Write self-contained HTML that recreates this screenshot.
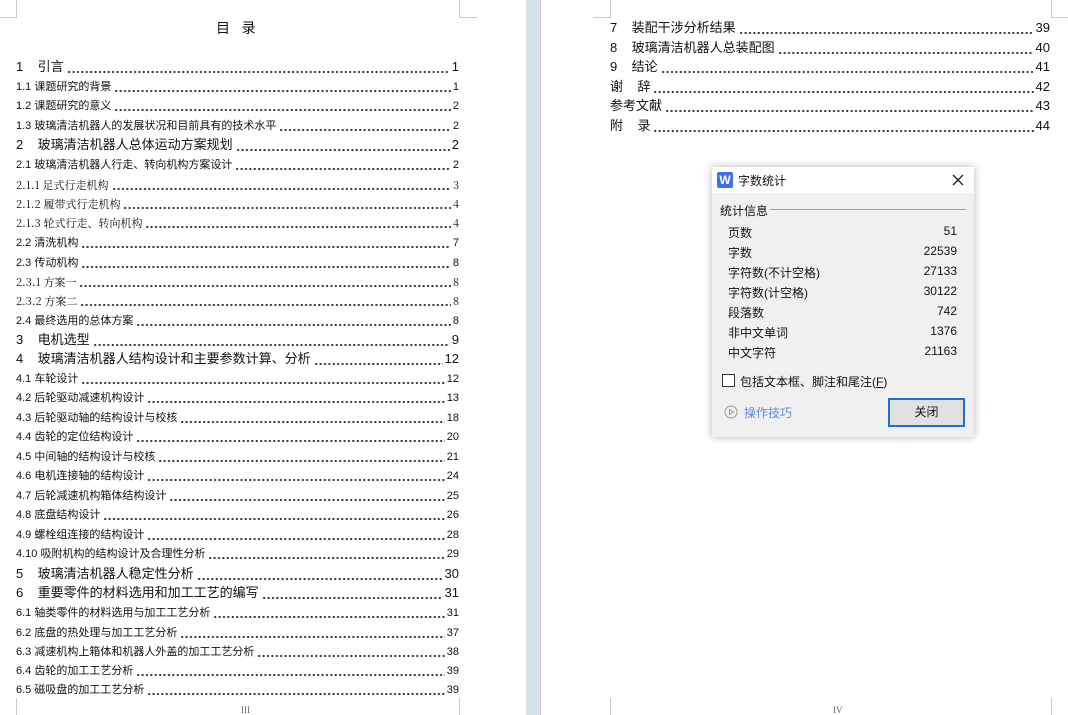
<!DOCTYPE html>
<html><head><meta charset="utf-8"><style>
*{margin:0;padding:0;box-sizing:border-box}
body{width:1068px;height:715px;overflow:hidden;background:#fff;position:relative;font-family:"Liberation Sans","Noto Sans CJK SC",sans-serif;color:#111}
.gap{position:absolute;left:526px;top:0;width:15px;height:715px;background:#d5e2e7;border-right:1px solid #c4ced3}
.m{position:absolute;border-color:#c8c8c8;border-style:solid;border-width:0}
.r{position:absolute;display:flex;align-items:flex-end;height:16px;font-size:11px;line-height:14px;white-space:nowrap}
.r .d{flex:1;height:10px;margin:0 2px 1px 3px;background-image:radial-gradient(circle,#333 0.9px,transparent 1.3px);background-size:4.4px 4px;background-repeat:repeat-x;background-position:0 6px}
.r.b{font-size:13px;line-height:16px;height:18px}
.r.s{font-family:"Noto Serif CJK SC","Liberation Serif",serif;font-size:11px;color:#111}
.L{left:16px;width:443px}
.R{left:610px;width:440px}
.dlg{position:absolute;left:712px;top:167px;width:262px;height:270px;background:#f0f0f0;box-shadow:0 0 8px rgba(0,0,0,.3);font-size:12px;color:#111}
.tb{height:26px;background:#fff;position:relative}
.row{position:absolute;left:16px;width:229px;display:flex;justify-content:space-between;font-size:12px}
</style></head><body>
<div class="gap"></div>
<div class="m" style="left:0;top:0;width:17px;height:18px;border-right-width:1px;border-bottom-width:1px"></div>
<div class="m" style="left:459px;top:0;width:18px;height:18px;border-left-width:1px;border-bottom-width:1px"></div>
<div class="m" style="left:0;top:698px;width:17px;height:17px;border-right-width:1px"></div>
<div class="m" style="left:459px;top:698px;width:18px;height:17px;border-left-width:1px"></div>
<div class="m" style="left:593px;top:0;width:18px;height:18px;border-right-width:1px;border-bottom-width:1px"></div>
<div class="m" style="left:1051px;top:0;width:17px;height:18px;border-left-width:1px;border-bottom-width:1px"></div>
<div class="m" style="left:593px;top:698px;width:18px;height:17px;border-right-width:1px"></div>
<div class="m" style="left:1051px;top:698px;width:17px;height:17px;border-left-width:1px"></div>
<div style="position:absolute;left:216px;top:18px;font-size:14px">目&nbsp;&nbsp;&nbsp;录</div>
<div style="position:absolute;left:241px;top:705px;font-size:9px;color:#666;font-family:'Liberation Serif',serif">III</div>
<div style="position:absolute;left:833px;top:705px;font-size:9px;color:#666;font-family:'Liberation Serif',serif">IV</div>

<div class="r b L" style="top:57px"><span>1&nbsp;&nbsp;&nbsp;&nbsp;引言</span><span class="d"></span><span>1</span></div>
<div class="r L" style="top:78px"><span>1.1 课题研究的背景</span><span class="d"></span><span>1</span></div>
<div class="r L" style="top:97px"><span>1.2 课题研究的意义</span><span class="d"></span><span>2</span></div>
<div class="r L" style="top:117px"><span>1.3 玻璃清洁机器人的发展状况和目前具有的技术水平</span><span class="d"></span><span>2</span></div>
<div class="r b L" style="top:135px"><span>2&nbsp;&nbsp;&nbsp;&nbsp;玻璃清洁机器人总体运动方案规划</span><span class="d"></span><span>2</span></div>
<div class="r L" style="top:156px"><span>2.1 玻璃清洁机器人行走、转向机构方案设计</span><span class="d"></span><span>2</span></div>
<div class="r s L" style="top:176px"><span>2.1.1 足式行走机构</span><span class="d"></span><span>3</span></div>
<div class="r s L" style="top:195px"><span>2.1.2 履带式行走机构</span><span class="d"></span><span>4</span></div>
<div class="r s L" style="top:214px"><span>2.1.3 轮式行走、转向机构</span><span class="d"></span><span>4</span></div>
<div class="r L" style="top:234px"><span>2.2 清洗机构</span><span class="d"></span><span>7</span></div>
<div class="r L" style="top:254px"><span>2.3 传动机构</span><span class="d"></span><span>8</span></div>
<div class="r s L" style="top:273px"><span>2.3.1 方案一</span><span class="d"></span><span>8</span></div>
<div class="r s L" style="top:292px"><span>2.3.2 方案二</span><span class="d"></span><span>8</span></div>
<div class="r L" style="top:312px"><span>2.4 最终选用的总体方案</span><span class="d"></span><span>8</span></div>
<div class="r b L" style="top:330px"><span>3&nbsp;&nbsp;&nbsp;&nbsp;电机选型</span><span class="d"></span><span>9</span></div>
<div class="r b L" style="top:349px"><span>4&nbsp;&nbsp;&nbsp;&nbsp;玻璃清洁机器人结构设计和主要参数计算、分析</span><span class="d"></span><span>12</span></div>
<div class="r L" style="top:370px"><span>4.1 车轮设计</span><span class="d"></span><span>12</span></div>
<div class="r L" style="top:389px"><span>4.2 后轮驱动减速机构设计</span><span class="d"></span><span>13</span></div>
<div class="r L" style="top:409px"><span>4.3 后轮驱动轴的结构设计与校核</span><span class="d"></span><span>18</span></div>
<div class="r L" style="top:428px"><span>4.4 齿轮的定位结构设计</span><span class="d"></span><span>20</span></div>
<div class="r L" style="top:448px"><span>4.5 中间轴的结构设计与校核</span><span class="d"></span><span>21</span></div>
<div class="r L" style="top:467px"><span>4.6 电机连接轴的结构设计</span><span class="d"></span><span>24</span></div>
<div class="r L" style="top:487px"><span>4.7 后轮减速机构箱体结构设计</span><span class="d"></span><span>25</span></div>
<div class="r L" style="top:506px"><span>4.8 底盘结构设计</span><span class="d"></span><span>26</span></div>
<div class="r L" style="top:526px"><span>4.9 螺栓组连接的结构设计</span><span class="d"></span><span>28</span></div>
<div class="r L" style="top:545px"><span>4.10 吸附机构的结构设计及合理性分析</span><span class="d"></span><span>29</span></div>
<div class="r b L" style="top:564px"><span>5&nbsp;&nbsp;&nbsp;&nbsp;玻璃清洁机器人稳定性分析</span><span class="d"></span><span>30</span></div>
<div class="r b L" style="top:583px"><span>6&nbsp;&nbsp;&nbsp;&nbsp;重要零件的材料选用和加工工艺的编写</span><span class="d"></span><span>31</span></div>
<div class="r L" style="top:604px"><span>6.1 轴类零件的材料选用与加工工艺分析</span><span class="d"></span><span>31</span></div>
<div class="r L" style="top:624px"><span>6.2 底盘的热处理与加工工艺分析</span><span class="d"></span><span>37</span></div>
<div class="r L" style="top:643px"><span>6.3 减速机构上箱体和机器人外盖的加工工艺分析</span><span class="d"></span><span>38</span></div>
<div class="r L" style="top:662px"><span>6.4 齿轮的加工工艺分析</span><span class="d"></span><span>39</span></div>
<div class="r L" style="top:681px"><span>6.5 磁吸盘的加工工艺分析</span><span class="d"></span><span>39</span></div>

<div class="r b R" style="top:18px"><span>7&nbsp;&nbsp;&nbsp;&nbsp;装配干涉分析结果</span><span class="d"></span><span>39</span></div>
<div class="r b R" style="top:38px"><span>8&nbsp;&nbsp;&nbsp;&nbsp;玻璃清洁机器人总装配图</span><span class="d"></span><span>40</span></div>
<div class="r b R" style="top:57px"><span>9&nbsp;&nbsp;&nbsp;&nbsp;结论</span><span class="d"></span><span>41</span></div>
<div class="r b R" style="top:77px"><span>谢&nbsp;&nbsp;&nbsp;&nbsp;辞</span><span class="d"></span><span>42</span></div>
<div class="r b R" style="top:96px"><span>参考文献</span><span class="d"></span><span>43</span></div>
<div class="r b R" style="top:116px"><span>附&nbsp;&nbsp;&nbsp;&nbsp;录</span><span class="d"></span><span>44</span></div>

<div class="dlg">
 <div class="tb">
  <div style="position:absolute;left:5px;top:5px;width:16px;height:16px;background:#3e6ff0;border-radius:2px;color:#fff;font-weight:bold;font-size:12px;line-height:16px;text-align:center">W</div>
  <div style="position:absolute;left:26px;top:5px;font-size:12px">字数统计</div>
  <svg style="position:absolute;left:240px;top:7px" width="12" height="12"><path d="M1 1L11 11M11 1L1 11" stroke="#222" stroke-width="1.3"/></svg>
 </div>
 <div style="position:absolute;left:8px;top:35px">统计信息</div>
 <div style="position:absolute;left:58px;top:42px;width:196px;height:1px;background:#a0a0a0"></div>
 <div class="row" style="top:57px"><span>页数</span><span>51</span></div>
 <div class="row" style="top:77px"><span>字数</span><span>22539</span></div>
 <div class="row" style="top:97px"><span>字符数(不计空格)</span><span>27133</span></div>
 <div class="row" style="top:117px"><span>字符数(计空格)</span><span>30122</span></div>
 <div class="row" style="top:137px"><span>段落数</span><span>742</span></div>
 <div class="row" style="top:157px"><span>非中文单词</span><span>1376</span></div>
 <div class="row" style="top:177px"><span>中文字符</span><span>21163</span></div>
 <div style="position:absolute;left:10px;top:207px;width:13px;height:13px;border:1px solid #333;background:#fff"></div>
 <div style="position:absolute;left:28px;top:206px">包括文本框、脚注和尾注(<u>F</u>)</div>
 <svg style="position:absolute;left:12px;top:238px" width="14" height="14"><circle cx="7" cy="7" r="6" fill="none" stroke="#999"/><path d="M5.5 4.5L9.5 7L5.5 9.5Z" fill="none" stroke="#999"/></svg>
 <div style="position:absolute;left:32px;top:237px;color:#5a8fd6">操作技巧</div>
 <div style="position:absolute;left:176px;top:231px;width:77px;height:29px;border:2px solid #1a73d0;background:#e1e1e1;text-align:center;line-height:25px">关闭</div>
</div>
</body></html>
